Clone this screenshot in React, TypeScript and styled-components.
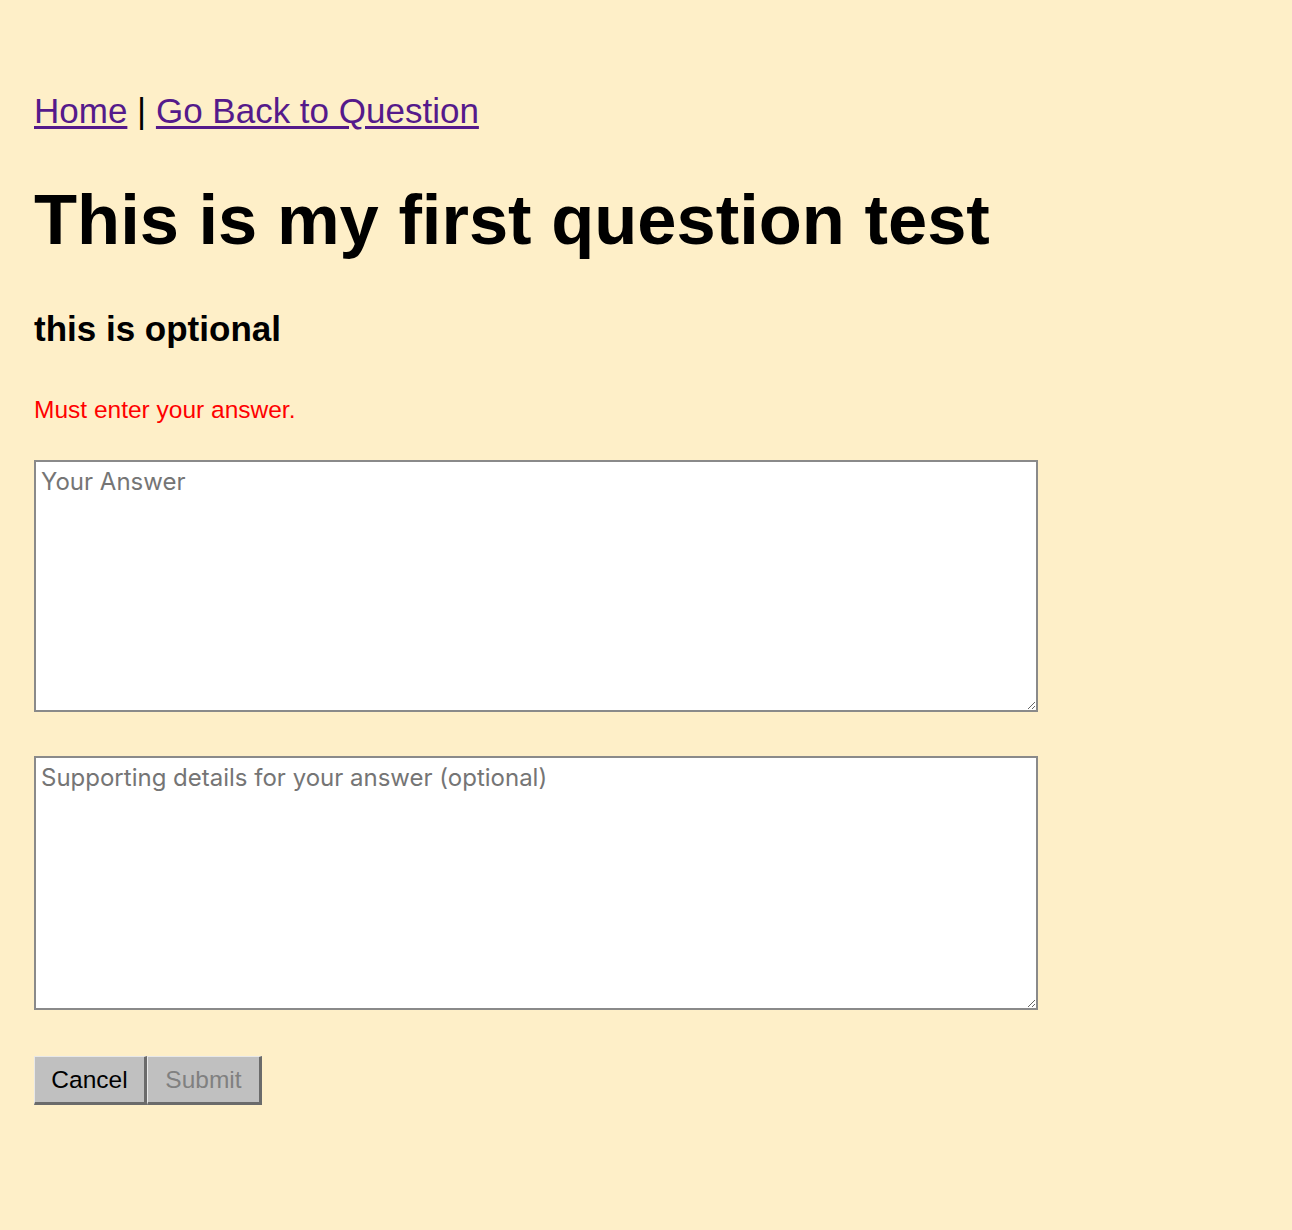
import React from "react";
import styled, { createGlobalStyle } from "styled-components";

const GlobalStyle = createGlobalStyle`
  html, body {
    margin: 0;
    padding: 0;
    background: #feefc8;
  }
  body {
    font-family: "Liberation Sans", Arial, sans-serif;
  }
`;

const Page = styled.div`
  padding: 90px 34px 120px;
  min-height: 1230px;
  box-sizing: border-box;
`;

const Nav = styled.nav`
  font-size: 35px;
  line-height: 42px;
  color: #000;
`;

const NavLink = styled.a`
  color: #551a8b;
  text-decoration: underline;
  text-underline-offset: 3px;
`;

const Title = styled.h1`
  font-size: 70.5px;
  font-weight: bold;
  line-height: 80px;
  margin: 48px 0 0;
`;

const Subtitle = styled.h3`
  font-size: 35px;
  font-weight: bold;
  line-height: 40px;
  margin: 49px 0 0;
`;

const ErrorText = styled.p`
  color: #ff0000;
  font-size: 24.5px;
  line-height: 28px;
  margin: 47px 0 0;
`;

const Form = styled.form`
  display: flex;
  flex-direction: column;
  gap: 44px;
  margin-top: 36px;
`;

const TextArea = styled.textarea<{ $tall?: boolean }>`
  width: 1004px;
  height: ${(p) => (p.$tall ? "254px" : "252px")};
  box-sizing: border-box;
  border: 2px solid #8a8a8a;
  background: #fff;
  padding: 5px 5px;
  font-family: Inter, "Liberation Sans", Arial, sans-serif;
  font-size: 24px;
  line-height: 30px;
  color: #000;
  outline: none;
  &::placeholder {
    color: #757575;
  }
`;

const Buttons = styled.div`
  display: flex;
  margin-top: 2px;
`;

const Button = styled.button<{ $disabled?: boolean }>`
  width: ${(p) => (p.$disabled ? "115px" : "113px")};
  height: 49px;
  background: #c0c0c0;
  border-style: solid;
  border-width: 1px 3px 3px 1px;
  border-color: #e8e8e8 #6b6b6b #6b6b6b #e8e8e8;
  font-family: "Liberation Sans", Arial, sans-serif;
  font-size: 24.5px;
  color: ${(p) => (p.$disabled ? "#808080" : "#000")};
  padding: 0;
  cursor: ${(p) => (p.$disabled ? "default" : "pointer")};
`;

export default function App() {
  return (
    <>
      <GlobalStyle />
      <Page>
        <Nav>
          <NavLink href="#">Home</NavLink> | <NavLink href="#">Go Back to Question</NavLink>
        </Nav>
        <Title>This is my first question test</Title>
        <Subtitle>this is optional</Subtitle>
        <ErrorText>Must enter your answer.</ErrorText>
        <Form onSubmit={(e) => e.preventDefault()}>
          <TextArea placeholder="Your Answer" />
          <TextArea $tall placeholder="Supporting details for your answer (optional)" />
          <Buttons>
            <Button type="button">Cancel</Button>
            <Button type="submit" $disabled disabled>
              Submit
            </Button>
          </Buttons>
        </Form>
      </Page>
    </>
  );
}
